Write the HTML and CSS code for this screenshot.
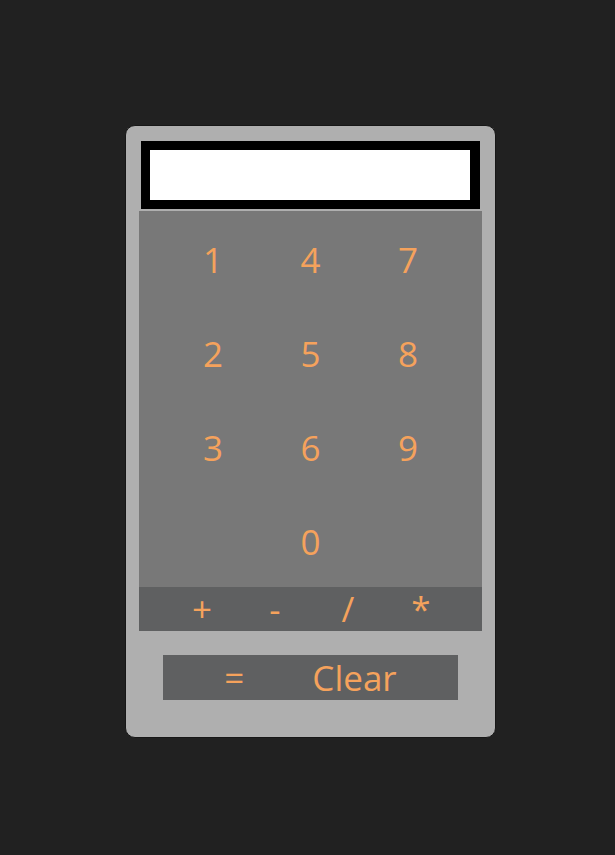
FILE: index.html
```html
<!DOCTYPE html>
<html>
<head>
<meta charset="utf-8">
<link rel="stylesheet" href="styles.css">
</head>
<body>
<div class="page">
  <div class="calc">
    <div class="display"><div class="screen"></div></div>
    <div class="keys">
      <button class="key">1</button>
      <button class="key">4</button>
      <button class="key">7</button>
      <button class="key">2</button>
      <button class="key">5</button>
      <button class="key">8</button>
      <button class="key">3</button>
      <button class="key">6</button>
      <button class="key">9</button>
      <span class="key blank"></span>
      <button class="key">0</button>
      <span class="key blank"></span>
    </div>
    <div class="ops">
      <button class="op">+</button>
      <button class="op">-</button>
      <button class="op">/</button>
      <button class="op">*</button>
    </div>
    <div class="actions">
      <button class="act">=</button>
      <button class="act">Clear</button>
    </div>
  </div>
</div>
</body>
</html>
```
FILE: styles.css
```css
* { box-sizing: border-box; }
html, body { margin: 0; padding: 0; background: #212121; }
.page {
  padding: 125px 0 0 125px;
  height: 855px;
}
.calc {
  width: 371px;
  height: 613px;
  background: #afafaf;
  border: 1px solid #171717;
  border-radius: 10px;
  padding: 15px 13px 0 13px;
  display: flex;
  flex-direction: column;
}
.display {
  margin: 0 2px;
  height: 68px;
  background: #fff;
  border-style: solid;
  border-color: #000;
  border-width: 9px 10px 9px 9px;
}
.keys {
  margin-top: 2px;
  height: 376px;
  background: #787878;
  display: grid;
  grid-template-columns: repeat(3, 97.5px);
  grid-template-rows: repeat(4, 94px);
  justify-content: center;
}
button {
  background: none;
  border: 0;
  padding: 0;
  margin: 0;
  font-family: "Open Sans", "DejaVu Sans", sans-serif;
  color: #f5a25c;
  cursor: pointer;
}
.key {
  font-size: 35px;
  display: flex;
  align-items: center;
  justify-content: center;
  padding-top: 2px;
}
.ops {
  height: 44px;
  background: #5f6061;
  display: flex;
  justify-content: center;
  padding-left: 2px;
}
.op {
  width: 73px;
  font-size: 35px;
  line-height: 44px;
  padding-bottom: 2px;
}
.actions {
  margin: 24px 24px 0 24px;
  height: 45px;
  background: #5f6061;
  display: flex;
  justify-content: center;
  align-items: center;
  gap: 68px;
}
.act {
  font-size: 35px;
  line-height: 45px;
  padding-bottom: 0;
}
```
